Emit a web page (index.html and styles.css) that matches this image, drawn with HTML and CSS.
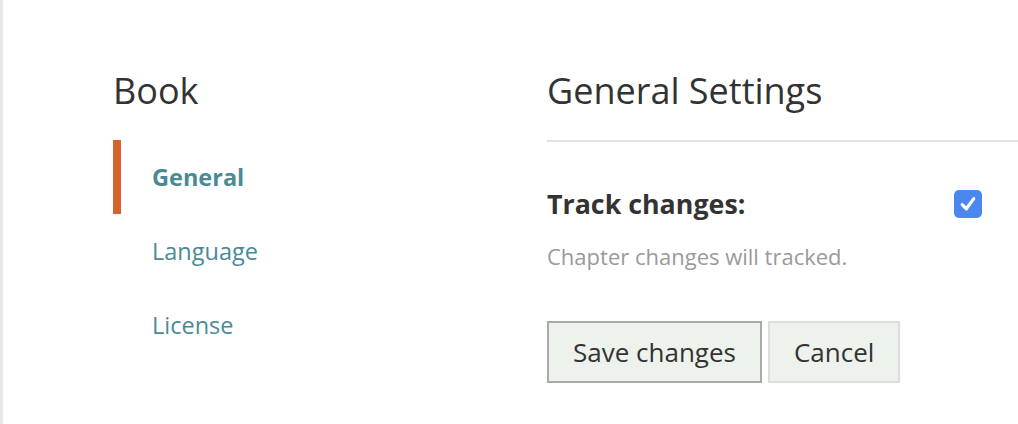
FILE: index.html
```html
<!DOCTYPE html>
<html lang="en">
<head>
<meta charset="utf-8">
<title>Book settings</title>
<link rel="stylesheet" href="styles.css">
</head>
<body>
<div class="page">
  <aside class="sidebar">
    <h2 class="sidebar-title">Book</h2>
    <nav class="nav">
      <a class="nav-item active" href="#">General</a>
      <a class="nav-item" href="#">Language</a>
      <a class="nav-item" href="#">License</a>
    </nav>
  </aside>
  <main class="content">
    <h1 class="content-title">General Settings</h1>
    <div class="field-row">
      <label class="field-label" for="track">Track changes:</label>
      <span class="checkbox" id="track" role="checkbox" aria-checked="true">
        <svg viewBox="0 0 28 28" width="28" height="28" aria-hidden="true">
          <rect x="0" y="0" width="28" height="28" rx="5" ry="5" fill="#4a87ee"/>
          <path d="M8.2 14.6 L12.3 18.8 L19.8 8.6" fill="none" stroke="#ffffff" stroke-width="3.2" stroke-linecap="round" stroke-linejoin="round"/>
        </svg>
      </span>
    </div>
    <p class="help">Chapter changes will tracked.</p>
    <div class="actions">
      <button class="btn btn-primary" type="button">Save changes</button>
      <button class="btn btn-secondary" type="button">Cancel</button>
    </div>
  </main>
</div>
</body>
</html>
```

FILE: styles.css
```css
* {
  box-sizing: border-box;
}

html, body {
  margin: 0;
  padding: 0;
  background: #ffffff;
}

body {
  font-family: "Open Sans", "Noto Sans", sans-serif;
  color: #333333;
}

.page {
  display: flex;
  min-height: 424px;
  border-left: 3px solid #e6e6e6;
  padding-left: 110px;
  padding-top: 70px;
}

.sidebar {
  width: 434px;
  flex: none;
}

.sidebar-title,
.content-title {
  margin: 0;
  font-size: 36px;
  line-height: 42px;
  font-weight: 400;
  color: #333333;
}

.nav {
  display: flex;
  flex-direction: column;
  margin-top: 28px;
}

.nav-item {
  display: flex;
  align-items: center;
  height: 74px;
  padding-left: 31px;
  border-left: 8px solid transparent;
  font-size: 23.5px;
  color: #4a8a97;
  text-decoration: none;
}

.nav-item.active {
  border-left-color: #d5622a;
  font-weight: 700;
}

.content {
  flex: 1;
  min-width: 0;
}

.content-title {
  padding-bottom: 28px;
  border-bottom: 2px solid #e3e3e3;
}

.field-row {
  display: flex;
  align-items: center;
  justify-content: space-between;
  margin-top: 45px;
  padding-right: 36px;
}

.field-label {
  padding-top: 1px;
  font-size: 26.8px;
  line-height: 32px;
  font-weight: 700;
  color: #333333;
}

.checkbox {
  display: block;
  width: 28px;
  height: 28px;
}

.checkbox svg {
  display: block;
}

.help {
  margin: 21px 0 0;
  font-size: 22px;
  line-height: 30px;
  color: #9a9a9a;
}

.actions {
  display: flex;
  gap: 6px;
  margin-top: 50px;
}

.btn {
  height: 62px;
  padding: 0 24px;
  font-family: "Open Sans", "Noto Sans", sans-serif;
  font-size: 26px;
  color: #333333;
  background: #eef2ec;
  border: 2px solid #aaaaaa;
  border-radius: 0;
}

.btn-secondary {
  border-color: #dddddd;
}
```
